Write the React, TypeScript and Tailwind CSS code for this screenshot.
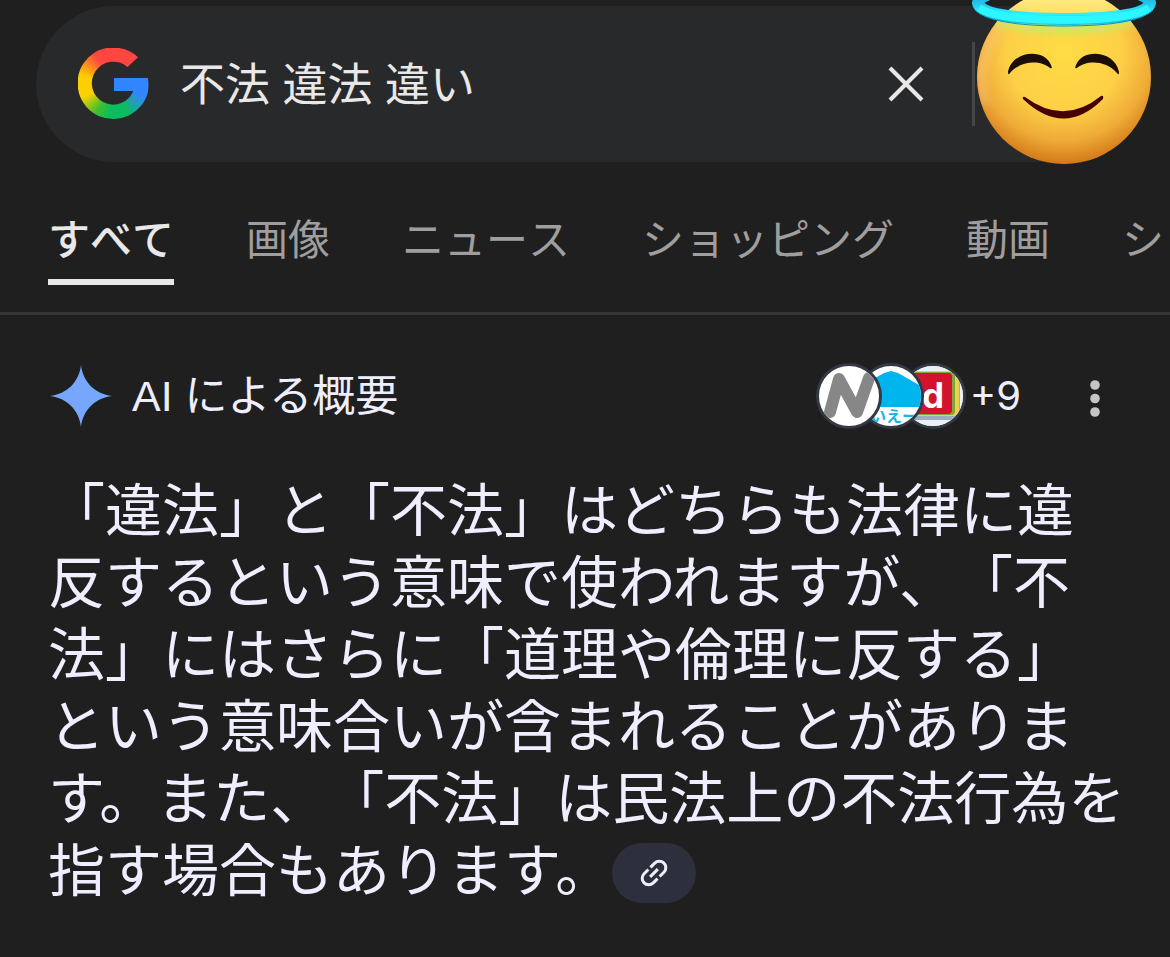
import type { ReactNode } from "react";

interface ITab {
  label: string;
  active?: boolean;
}

const tabs: ITab[] = [
  { label: "すべて", active: true },
  { label: "画像" },
  { label: "ニュース" },
  { label: "ショッピング" },
  { label: "動画" },
  { label: "シ" },
];

const GoogleLogo = () => (
  <div
    role="img"
    aria-label="Google"
    className="relative h-[72px] w-[72px] shrink-0 bg-[conic-gradient(#ff4641_0deg,#ff4641_50deg,#3186ff_70deg,#3186ff_112deg,#0ebc5f_155deg,#0ebc5f_188deg,#3cc030_212deg,#ffd000_248deg,#ffcc00_285deg,#ff4641_328deg,#ff4641_360deg)] [clip-path:path('M60_9.3A35.8_35.8_0_1_0_70_44Q70.6_36_70_30H36V43H55.3A21.5_21.5_0_1_1_49.5_19Z')]"
  >
    <span className="absolute top-[30px] left-9 h-[13px] w-9 bg-[#3186ff]" />
  </div>
);

const AngelFace = () => (
  <svg viewBox="0 0 186 168" className="absolute -top-1.5 right-[-23px] h-[168px] w-[186px]" aria-hidden="true">
    <defs>
      <radialGradient id="face" cx="0.5" cy="0.36" r="0.66">
        <stop offset="0" stopColor="#ffdc45" />
        <stop offset="0.5" stopColor="#fdd046" />
        <stop offset="0.76" stopColor="#f0ac38" />
        <stop offset="1" stopColor="#cf7115" />
      </radialGradient>
      <linearGradient id="shine" x1="0" x2="0" y1="0" y2="1">
        <stop offset="0" stopColor="#fff6a0" />
        <stop offset="0.25" stopColor="#ffe96a" stopOpacity="0" />
      </linearGradient>
      <linearGradient id="halo" x1="0" x2="0" y1="0" y2="1">
        <stop offset="0" stopColor="#1c96c8" />
        <stop offset="0.55" stopColor="#25c8ee" />
        <stop offset="0.85" stopColor="#2cf3ff" />
        <stop offset="1" stopColor="#14bfe4" />
      </linearGradient>
      <filter id="soft" x="-20%" y="-60%" width="140%" height="220%">
        <feGaussianBlur stdDeviation="4" />
      </filter>
      <clipPath id="faceClip">
        <circle cx="93" cy="77" r="87" />
      </clipPath>
    </defs>
    <circle cx="93" cy="77" r="87" fill="url(#face)" />
    <circle cx="93" cy="77" r="87" fill="url(#shine)" />
    <g clipPath="url(#faceClip)">
      <path d="M14 104 A82 82 0 0 1 34 22" fill="none" stroke="#ffd29a" strokeWidth="7" opacity="0.5" filter="url(#soft)" />
      <path d="M10 6 Q20 28 93 29 Q166 28 176 6" fill="none" stroke="#b6f06a" strokeWidth="8" opacity="0.8" filter="url(#soft)" />
    </g>
    <path d="M7 3 Q10 19 93 19 Q176 19 179 3 Q176 -13 93 -13 Q10 -13 7 3Z" fill="none" stroke="url(#halo)" strokeWidth="12" />
    <path d="M4 10 Q20 26 93 26 Q166 26 182 10" fill="none" stroke="#128fc0" strokeWidth="1" />
    <path d="M8 8 Q26 20 93 20 Q160 20 178 8" fill="none" stroke="#2cf6ff" strokeWidth="8" />
    <path d="M37 72 C41 50 74 48 80 65 Q82 69 79 68 C70 60 50 60 39 73 Q37 76 37 72Z" fill="#1c0d05" />
    <path d="M148 72 C144 50 111 48 105 65 Q103 69 106 68 C115 60 135 60 146 73 Q148 76 148 72Z" fill="#1c0d05" />
    <path d="M54 97 Q93 126 130 96 Q133 95 132 99 Q93 138 52 99 Q51 96 54 97Z" fill="#470000" />
  </svg>
);

const SparkIcon = () => (
  <svg viewBox="0 0 62 62" className="ml-0.5 h-[62px] w-[62px]" aria-hidden="true">
    <path d="M31 0 C33 17 45 29 62 31 C45 33 33 45 31 62 C29 45 17 33 0 31 C17 29 29 17 31 0Z" fill="#76a7fc" />
  </svg>
);

const SourceIcon = ({ className, children }: { className: string; children: ReactNode }) => (
  <span className={`relative h-[66px] w-[66px] shrink-0 overflow-hidden rounded-full border-3 border-[#333845] bg-white ${className}`}>
    <svg viewBox="0 0 60 60" className="h-full w-full">
      {children}
    </svg>
  </span>
);

const Sources = () => (
  <button type="button" aria-label="+9" className="flex items-center">
    <SourceIcon className="z-20">
      <path d="M11 46 L20 13 L38 46 L50 12" fill="none" stroke="#878787" strokeWidth="12" strokeLinecap="round" strokeLinejoin="round" />
    </SourceIcon>
    <SourceIcon className="z-10 -ml-6">
      <path d="M30 5 L37 7 L60 20 V41 H0 V20 L23 7Z" fill="#00b5ee" />
      <text x="9" y="56" fontSize="16" fontWeight="700" fill="#19b5e6">いえー</text>
    </SourceIcon>
    <SourceIcon className="-ml-6">
      <rect width="60" height="60" fill="#eceff3" />
      <rect x="-4" y="5" width="61" height="49" rx="5" fill="#9aaec0" />
      <rect x="-4" y="5" width="60" height="45" rx="4" fill="#e8d44c" />
      <rect x="-4" y="6" width="56" height="43" rx="4" fill="#7fa63a" />
      <rect x="-4" y="7" width="53" height="41" rx="4" fill="#d3122d" />
      <text x="19" y="42" fontSize="35" fontWeight="700" fill="#fff">d</text>
    </SourceIcon>
    <span className="ml-1 text-[40px] leading-none">+9</span>
  </button>
);

const App = () => {
  return (
    <div className="min-h-screen overflow-hidden bg-[#1f1f1f] font-['Inter','Noto_Sans_CJK_JP',sans-serif] text-[#e8e8e8]">
      <header className="px-9 pt-1.5">
        <form role="search" className="relative flex h-[156px] items-center rounded-full bg-[#28292a] pl-[42px]">
          <GoogleLogo />
          <input
            type="text"
            aria-label="検索"
            defaultValue="不法 違法 違い"
            className="ml-[30px] min-w-0 flex-1 bg-transparent pt-1 font-['Liberation_Sans','Noto_Sans_CJK_JP',sans-serif] text-[45px] leading-[60px] outline-none"
          />
          <button type="button" aria-label="クリア" className="mr-12 shrink-0">
            <svg viewBox="0 0 36 36" className="h-9 w-9" fill="none" stroke="#e8e8e8" strokeWidth="4">
              <path d="M2 2 L34 34 M34 2 L2 34" />
            </svg>
          </button>
          <span className="mr-[159px] h-[84px] w-[3px] shrink-0 bg-[#444648]" />
          <AngelFace />
        </form>
      </header>

      <nav className="mt-12 flex gap-[72px] overflow-hidden border-b-3 border-[#363636] pb-[27px] pl-12 text-[42px] leading-[60px] whitespace-nowrap [font-kerning:none]">
        {tabs.map(({ label, active }) => (
          <a
            key={label}
            href="#"
            className={
              active
                ? "shrink-0 border-b-6 border-[#e8e8e8] pb-[9px] font-medium text-[#e8e8e8]"
                : "shrink-0 border-b-6 border-transparent pb-[9px] text-[#9e9e9e]"
            }
          >
            {label}
          </a>
        ))}
      </nav>

      <main className="px-12 pt-12 text-[#eeeeff]">
        <div className="flex items-center pr-[21px]">
          <SparkIcon />
          <h1 className="ml-5 flex-1 font-['Liberation_Sans','Noto_Sans_CJK_JP',sans-serif] text-[43px] leading-[60px]">
            AI による概要
          </h1>
          <Sources />
          <button type="button" aria-label="その他" className="ml-[68px]">
            <svg viewBox="0 0 12 42" className="h-[42px] w-3" fill="#c4c4c4">
              <circle cx="6" cy="10" r="4.8" />
              <circle cx="6" cy="23.5" r="4.8" />
              <circle cx="6" cy="37" r="4.8" />
            </svg>
          </button>
        </div>

        <p className="mt-[46px] text-[57px] leading-[72px] whitespace-nowrap [text-spacing-trim:space-all]">
          「違法」と「不法」はどちらも法律に違
          <br />
          反するという意味で使われますが、「不
          <br />
          法」にはさらに「道理や倫理に反する」
          <br />
          という意味合いが含まれることがありま
          <br />
          す。また、「不法」は民法上の不法行為を
          <br />
          指す場合もあります。
          <button
            type="button"
            aria-label="リンク"
            className="mb-1 inline-flex h-[60px] w-[84px] items-center justify-center rounded-full bg-[#2d303c] align-middle"
          >
            <svg viewBox="0 0 28 28" className="h-7 w-7" fill="none" stroke="#eeeeff" strokeWidth="3">
              <g transform="rotate(-45 14 14)">
                <path d="M12.5 7.5 H6.5 a6.5 6.5 0 0 0 0 13 H12.5 M15.5 7.5 H21.5 a6.5 6.5 0 0 1 0 13 H15.5 M8.5 14 H19.5" />
              </g>
            </svg>
          </button>
        </p>
      </main>
    </div>
  );
};

export default App;
